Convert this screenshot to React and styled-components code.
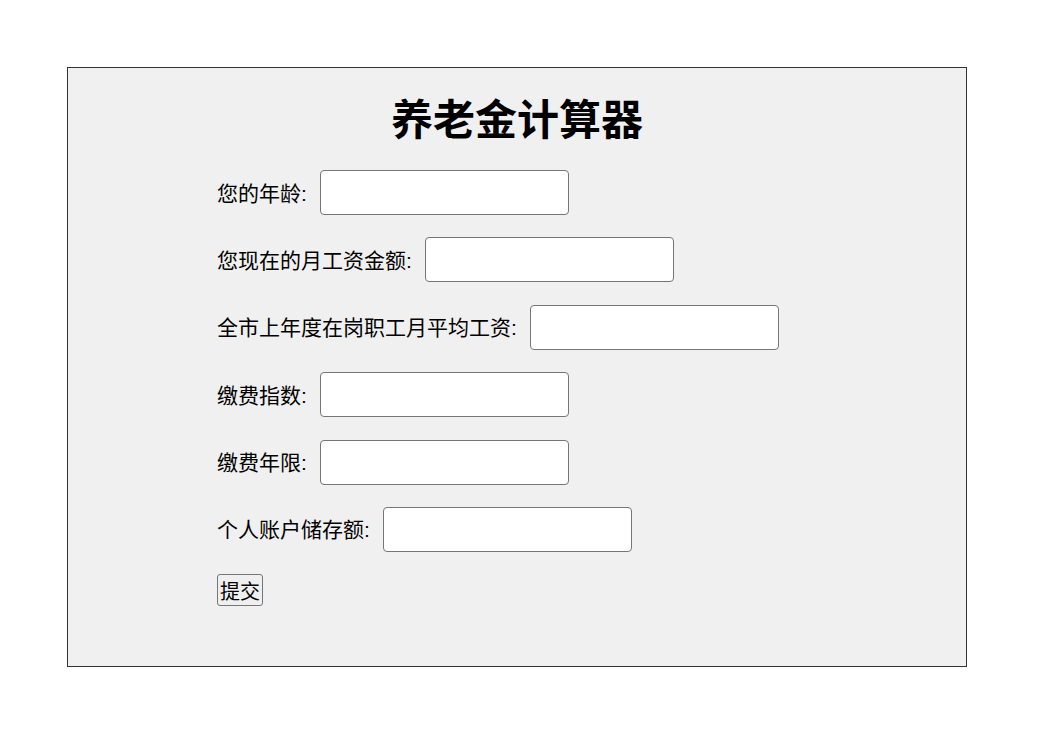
import React from 'react';
import styled, { createGlobalStyle } from 'styled-components';

const GlobalStyle = createGlobalStyle`
  body {
    margin: 0;
    background: #fff;
    font-family: 'Liberation Sans', 'Noto Sans CJK SC', sans-serif;
  }
`

const Page = styled.div`
  padding: 67px 0 0 67px;
`
const Card = styled.div`
  box-sizing: border-box;
  width: 900px;
  height: 600px;
  background: #f0f0f0;
  border: 1px solid #333;
  padding-top: 23px;
`
const Title = styled.h1`
  margin: 0;
  font-size: 42px;
  line-height: 60px;
  font-weight: 700;
  text-align: center;
  color: #000;
`
const Form = styled.form`
  width: 600px;
  margin: 19px auto 0;
`
const Row = styled.div`
  display: flex;
  align-items: center;
  height: 45px;
  margin-bottom: 22.4px;
`
const Label = styled.label`
  font-size: 21px;
  color: #000;
  margin-right: 13px;
  margin-top: -2px;
  white-space: nowrap;
`
const Input = styled.input`
  box-sizing: border-box;
  width: 249px;
  height: 45px;
  border: 1px solid #767676;
  border-radius: 4px;
  background: #fff;
  font-size: 20px;
  padding: 0 8px;
`
const Submit = styled.button`
  height: 32px;
  padding: 0 2px;
  font-family: 'Liberation Sans', 'Noto Sans CJK SC', sans-serif;
  font-size: 20px;
  color: #000;
  background: #efefef;
  border: 1px solid #767676;
  border-radius: 3px;
`

const fields = [
  { id: 'age', label: '您的年龄:' },
  { id: 'salary', label: '您现在的月工资金额:' },
  { id: 'avg', label: '全市上年度在岗职工月平均工资:' },
  { id: 'index', label: '缴费指数:' },
  { id: 'years', label: '缴费年限:' },
  { id: 'account', label: '个人账户储存额:' },
]

export default function App() {
  return (
    <Page>
      <GlobalStyle />
      <Card>
        <Title>养老金计算器</Title>
        <Form onSubmit={e => e.preventDefault()}>
          {fields.map(f => (
            <Row key={f.id}>
              <Label htmlFor={f.id}>{f.label}</Label>
              <Input id={f.id} type="text" />
            </Row>
          ))}
          <Submit type="submit">提交</Submit>
        </Form>
      </Card>
    </Page>
  )
}
